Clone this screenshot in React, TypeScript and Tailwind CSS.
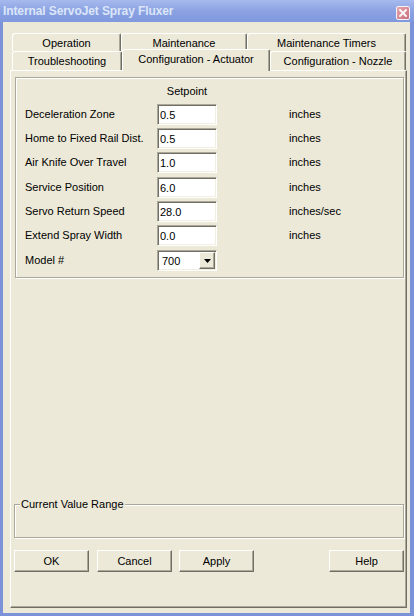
import React from "react"

const ROWS = [
  { label: "Deceleration Zone", value: "0.5", unit: "inches", gap: "" },
  { label: "Home to Fixed Rail Dist.", value: "0.5", unit: "inches", gap: "mt-[3px]" },
  { label: "Air Knife Over Travel", value: "1.0", unit: "inches", gap: "mt-[3px]" },
  { label: "Service Position", value: "6.0", unit: "inches", gap: "mt-[4px]" },
  { label: "Servo Return Speed", value: "28.0", unit: "inches/sec", gap: "mt-[3px]" },
  { label: "Extend Spray Width", value: "0.0", unit: "inches", gap: "mt-[3px]" },
]

const sunken =
  "border border-t-[#aca899] border-l-[#aca899] border-r-white border-b-white shadow-[inset_1px_1px_0_#716f64,inset_-1px_-1px_0_#f1efe2] bg-white"
const raised =
  "border border-t-white border-l-white border-r-[#716f64] border-b-[#716f64] shadow-[inset_-1px_-1px_0_#aca899] bg-[#ece9d8]"
const tab =
  "flex items-center justify-center border-t border-l border-r border-t-white border-l-white border-r-[#716f64] shadow-[inset_-1px_0_0_#aca899] rounded-tl-[3px] rounded-tr-[2px] bg-[#ece9d8]"
const etched = "border border-[#aca899] shadow-[1px_1px_0_#ffffff,inset_1px_1px_0_#ffffff]"

function Button({ label, className }: { label: string; className?: string }) {
  return (
    <div className={`w-[75px] h-[22px] flex items-center justify-center ${raised} ${className ?? ""}`}>
      {label}
    </div>
  )
}

export default function App() {
  return (
    <div className="w-[414px] h-[616px] bg-[#7b91d8] flex flex-col font-['Liberation_Sans',Arial,sans-serif] text-[11px] leading-[13px] text-black">
      {/* title bar */}
      <div className="h-[22px] flex items-center pl-[3px] pr-[4px] bg-gradient-to-b from-[#a7baee] via-[#8ba2e2] to-[#8099de]">
        <span className="text-[12px] font-bold text-[#dce6f9] tracking-[-0.1px]">Internal ServoJet Spray Fluxer</span>
        <div className="ml-auto mt-[3px] w-[14px] h-[14px] rounded-[2px] border border-[#f2f2f8] bg-gradient-to-br from-[#e6a7ac] to-[#c96f7d] flex items-center justify-center">
          <svg width="8" height="8" viewBox="0 0 8 8">
            <path d="M1 1 L7 7 M7 1 L1 7" stroke="#ffffff" strokeWidth="1.8" strokeLinecap="square" />
          </svg>
        </div>
      </div>

      {/* window body */}
      <div className="flex-1 ml-[3px] mr-[4px] mb-[3px] bg-[#ece9d8] pt-[11px] pl-[7px] pr-[3px] pb-[5px] flex flex-col">
        {/* tabs */}
        <div className="h-[37px] flex flex-col">
          <div className="flex h-[18px] ml-[2px]">
            <div className={`${tab} w-[109px] pt-[1px]`}>Operation</div>
            <div className={`${tab} w-[126px] pt-[1px]`}>Maintenance</div>
            <div className={`${tab} w-[159px] pt-[1px]`}>Maintenance Timers</div>
          </div>
          <div className="flex h-[19px] ml-[2px] items-end">
            <div className={`${tab} w-[110px] h-[19px] pt-[1px]`}>Troubleshooting</div>
            <div className={`${tab} relative z-10 w-[148px] h-[22px] -mb-[1px] pb-[2px]`}>Configuration - Actuator</div>
            <div className={`${tab} w-[136px] h-[19px] pt-[1px]`}>Configuration - Nozzle</div>
          </div>
        </div>

        {/* tab panel */}
        <div className="flex-1 flex flex-col border border-t-white border-l-white border-r-[#716f64] border-b-[#716f64] shadow-[inset_-1px_-1px_0_#aca899] pt-[6px] pl-[4px] pb-[35px]">
          <div className={`w-[389px] ${etched} pt-[6px] pl-[9px] pb-[6px]`}>
            <div className="h-[14px] flex items-center">
              <span className="ml-[132px] w-[60px] text-center">Setpoint</span>
            </div>
            <div className="mt-[6px] flex flex-col">
              {ROWS.map((r) => (
                <div key={r.label} className={`flex items-center h-[21px] ${r.gap}`}>
                  <span className="w-[132px]">{r.label}</span>
                  <div className={`w-[60px] h-[21px] ${sunken} flex items-center pl-[2px] pt-[1px]`}>{r.value}</div>
                  <span className="ml-[72px]">{r.unit}</span>
                </div>
              ))}
              <div className="flex items-center h-[21px] mt-[4px]">
                <span className="w-[132px]">Model #</span>
                <div className={`w-[60px] h-[21px] ${sunken} flex items-stretch p-[1px]`}>
                  <span className="flex-1 flex items-center pl-[3px] pt-[1px]">700</span>
                  <div className={`w-[16px] ${raised} flex items-center justify-center`}>
                    <svg width="7" height="4" viewBox="0 0 7 4">
                      <path d="M0 0 H7 L3.5 4 Z" fill="#000000" />
                    </svg>
                  </div>
                </div>
              </div>
            </div>
          </div>

          <div className="flex-1" />

          <div className={`relative -ml-[1px] w-[390px] h-[34px] ${etched}`}>
            <span className="absolute -top-[7px] left-[5px] px-[1px] bg-[#ece9d8]">Current Value Range</span>
          </div>

          <div className="flex mt-[12px] -ml-[1px] w-[390px]">
            <Button label="OK" />
            <Button label="Cancel" className="ml-[8px]" />
            <Button label="Apply" className="ml-[7px]" />
            <Button label="Help" className="ml-auto" />
          </div>
        </div>
      </div>
    </div>
  )
}
